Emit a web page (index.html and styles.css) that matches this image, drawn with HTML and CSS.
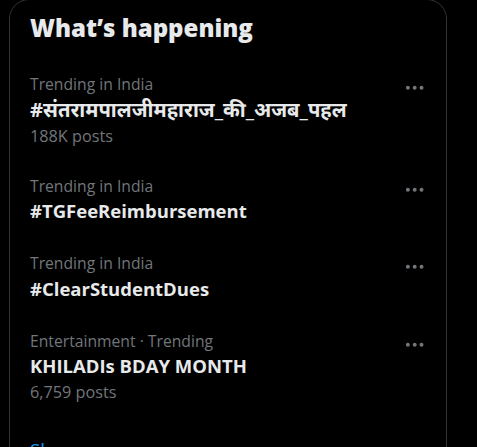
FILE: index.html
```html
<!DOCTYPE html>
<html lang="en">
<head>
<meta charset="utf-8">
<title>What's happening</title>
<link rel="stylesheet" href="styles.css">
</head>
<body>
<section class="card">
  <h2 class="card-title">What’s happening</h2>
  <div class="trend">
    <div class="trend-body">
      <div class="trend-meta">Trending in India</div>
      <div class="trend-name hi">#संतरामपालजीमहाराज_की_अजब_पहल</div>
      <div class="trend-count">188K posts</div>
    </div>
    <svg class="more" viewBox="0 0 24 24" aria-hidden="true"><path d="M3 12c0-1.1.9-2 2-2s2 .9 2 2-.9 2-2 2-2-.9-2-2zm9 2c1.1 0 2-.9 2-2s-.9-2-2-2-2 .9-2 2 .9 2 2 2zm7 0c1.1 0 2-.9 2-2s-.9-2-2-2-2 .9-2 2 .9 2 2 2z"/></svg>
  </div>
  <div class="trend">
    <div class="trend-body">
      <div class="trend-meta">Trending in India</div>
      <div class="trend-name">#TGFeeReimbursement</div>
    </div>
    <svg class="more" viewBox="0 0 24 24" aria-hidden="true"><path d="M3 12c0-1.1.9-2 2-2s2 .9 2 2-.9 2-2 2-2-.9-2-2zm9 2c1.1 0 2-.9 2-2s-.9-2-2-2-2 .9-2 2 .9 2 2 2zm7 0c1.1 0 2-.9 2-2s-.9-2-2-2-2 .9-2 2 .9 2 2 2z"/></svg>
  </div>
  <div class="trend">
    <div class="trend-body">
      <div class="trend-meta">Trending in India</div>
      <div class="trend-name">#ClearStudentDues</div>
    </div>
    <svg class="more" viewBox="0 0 24 24" aria-hidden="true"><path d="M3 12c0-1.1.9-2 2-2s2 .9 2 2-.9 2-2 2-2-.9-2-2zm9 2c1.1 0 2-.9 2-2s-.9-2-2-2-2 .9-2 2 .9 2 2 2zm7 0c1.1 0 2-.9 2-2s-.9-2-2-2-2 .9-2 2 .9 2 2 2z"/></svg>
  </div>
  <div class="trend">
    <div class="trend-body">
      <div class="trend-meta">Entertainment · Trending</div>
      <div class="trend-name">KHILADIs BDAY MONTH</div>
      <div class="trend-count">6,759 posts</div>
    </div>
    <svg class="more" viewBox="0 0 24 24" aria-hidden="true"><path d="M3 12c0-1.1.9-2 2-2s2 .9 2 2-.9 2-2 2-2-.9-2-2zm9 2c1.1 0 2-.9 2-2s-.9-2-2-2-2 .9-2 2 .9 2 2 2zm7 0c1.1 0 2-.9 2-2s-.9-2-2-2-2 .9-2 2 .9 2 2 2z"/></svg>
  </div>
  <a class="show-more" href="#">Show more</a>
</section>
</body>
</html>
```

FILE: styles.css
```css
html, body {
  margin: 0;
  padding: 0;
  background: #000;
}
body {
  width: 477px;
  height: 447px;
  overflow: hidden;
  font-family: "Open Sans", "Noto Sans", "Noto Sans Devanagari", "Lohit Devanagari", "FreeSans", sans-serif;
  color: #e7e9ea;
}
.card {
  box-sizing: border-box;
  margin: -1px 0 0 9px;
  width: 438px;
  border: 1px solid #2f3336;
  border-radius: 20px;
  display: flex;
  flex-direction: column;
}
.card-title {
  margin: 0;
  padding: 13px 20px 16px;
  font-size: 24px;
  line-height: 30px;
  font-weight: 800;
  color: #e7e9ea;
}
.trend {
  display: flex;
  justify-content: space-between;
  align-items: flex-start;
  padding: 15px 20px;
}
.trend-body {
  display: flex;
  flex-direction: column;
}
.trend-meta {
  font-size: 15.7px;
  line-height: 20px;
  color: #71767b;
}
.trend-name {
  padding-top: 2.5px;
  font-size: 18.5px;
  line-height: 25px;
  font-weight: 700;
  color: #e7e9ea;
}
.trend-name.hi {
  font-size: 20.2px;
}
.trend-count {
  padding-top: 4px;
  font-size: 16.25px;
  line-height: 20px;
  color: #71767b;
}
.more {
  width: 23.4px;
  height: 23.4px;
  margin-top: 2px;
  fill: #71767b;
  flex: none;
}
.show-more {
  padding: 20px 20px 20px;
  font-size: 18.75px;
  line-height: 25px;
  color: #1d9bf0;
  text-decoration: none;
}
```
